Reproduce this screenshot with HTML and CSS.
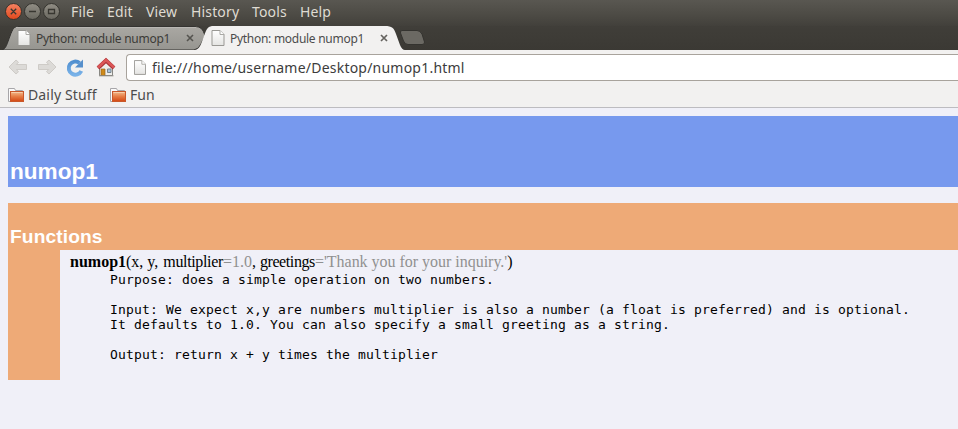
FILE: index.html
```html
<!DOCTYPE html>
<html lang="en">
<head>
<meta charset="utf-8">
<title>Python: module numop1</title>
<link rel="stylesheet" href="styles.css">
</head>
<body>
<svg width="0" height="0" class="defs">
  <defs>
    <linearGradient id="tabgrey" x1="0" y1="0" x2="0" y2="1"><stop offset="0" stop-color="#aaa8a3"/><stop offset="1" stop-color="#969590"/></linearGradient>
    <linearGradient id="red" x1="0" y1="0" x2="0" y2="1"><stop offset="0" stop-color="#f58262"/><stop offset="1" stop-color="#e0481c"/></linearGradient>
    <linearGradient id="grey" x1="0" y1="0" x2="0" y2="1"><stop offset="0" stop-color="#918e85"/><stop offset="1" stop-color="#69675f"/></linearGradient>
    <linearGradient id="paper" x1="0" y1="0" x2="0" y2="1"><stop offset="0" stop-color="#fff"/><stop offset="1" stop-color="#e4e4e2"/></linearGradient>
    <linearGradient id="orange" x1="0" y1="0" x2="0" y2="1"><stop offset="0" stop-color="#f3bd8e"/><stop offset=".5" stop-color="#e67d45"/><stop offset="1" stop-color="#d34713"/></linearGradient>
    <linearGradient id="blue" x1="0" y1="0" x2="0" y2="1"><stop offset="0" stop-color="#5290d0"/><stop offset="1" stop-color="#79b2e8"/></linearGradient>
    <symbol id="page" viewBox="0 0 13 16"><path d="M.5.5h8l4 4v11H.5z" fill="url(#paper)" stroke="#999894"/><path d="M8.5.5v4h4" fill="#fff" stroke="#aaa9a5"/></symbol>
    <symbol id="folder" viewBox="0 0 17 16"><path d="M.5 14.5V1.5h6l1 2h7v11z" fill="#fafafa" stroke="#a7a6a9"/><rect x="2.5" y="4.500" width="13" height="10" fill="url(#orange)" stroke="#c9582a"/><path d="M3.500 5.500h11" stroke="#f7cfaa"/></symbol>
  </defs>
</svg>
<header class="menubar">
  <svg class="controls" width="71" height="26" viewBox="0 0 71 26">
    <g stroke="#34332e"><circle cx="13.500" cy="11.500" r="8" fill="url(#red)"/><circle cx="32.500" cy="11.500" r="8" fill="url(#grey)"/><circle cx="51.500" cy="11.500" r="8" fill="url(#grey)"/></g>
    <path d="M10.800 8.800l5.400 5.400M16.200 8.800l-5.400 5.400M29 11.500h7M48.500 9.500h6v4h-6z" fill="none" stroke="#383731" stroke-width="1.300"/>
  </svg>
  <span class="m-file">File</span><span class="m-edit">Edit</span><span class="m-view">View</span><span class="m-history">History</span><span class="m-tools">Tools</span><span class="m-help">Help</span>
</header>
<nav class="tabs">
  <div class="tab back">
    <svg class="shape" width="205" height="24"><path d="M0 24C4 23 5 18 8 10C11 2 12 .5 17 .5H192C199 .5 201 3 203 10L199 18Q197 23 192 24z" fill="url(#tabgrey)" stroke="#343330"/><path d="M14 1.500H194" stroke="#b9b7b3"/></svg>
    <svg class="doc" width="14" height="16"><use href="#page"/></svg>
    <span class="title">Python: module numop1</span>
    <svg class="close" width="8" height="8"><path d="M1 1l6 6M7 1L1 7" stroke="#55544f" stroke-width="1.600"/></svg>
  </div>
  <div class="tab front">
    <svg class="shape" width="210" height="24"><path d="M0 24C5 23 6 18 9 10C12 2 13 0 19 0H190C197 0 199 2 201 8L205 19Q207 24 210 24z" fill="#f2f1f0"/></svg>
    <svg class="doc" width="14" height="16"><use href="#page"/></svg>
    <span class="title">Python: module numop1</span>
    <svg class="close" width="8" height="8"><path d="M1 1l6 6M7 1L1 7" stroke="#65635f" stroke-width="1.700"/></svg>
  </div>
  <svg class="newtab" width="27" height="16"><path d="M3 .5H18Q21 .5 23 4L25.500 12Q26 14.500 23 14.500H9Q6 14.500 4.500 11L1.500 3Q1 .5 3 .5z" fill="#6b6963" stroke="#34332f"/></svg>
</nav>
<div class="toolbar">
  <svg class="tools" width="126" height="32" viewBox="0 50 126 32">
    <path d="M9 67l7-7 2.500 2.300-2.200 2.200H26.500v5H16.300l2.200 2.200-2.500 2.300z" fill="#dcdad7" stroke="#cecbc7" stroke-linejoin="round"/>
    <path d="M56 67l-7-7-2.500 2.300 2.200 2.200H38.500v5h10.200l-2.200 2.200 2.500 2.300z" fill="#dcdad7" stroke="#cecbc7" stroke-linejoin="round"/>
    <path d="M81.300 71A6.600 6.600 0 1 1 79.500 63" fill="none" stroke="url(#blue)" stroke-width="4"/><path d="M83 59.500V67.500H75z" fill="#568fcb"/>
    <path d="M99.500 67v8.500h13V67L106 60z" fill="#eeeeeb" stroke="#888782"/><path d="M101 69h4v6.500h-4z" fill="#cf8a19" stroke="#94631d" stroke-width=".7"/><path d="M107.500 69h3.500v3.500h-3.500z" fill="#a9c3dc" stroke="#78858e"/><path d="M98 68L106 60.500L114 68" fill="none" stroke="#a83236" stroke-width="4"/><path d="M98 67.500L106 60L114 67.500" fill="none" stroke="#db5657" stroke-width="2.600"/><path d="M99 75.800h14.500" stroke="#8d8c88"/>
  </svg>
  <div class="address"><svg width="12" height="15"><use href="#page"/></svg><span class="url">file:///home/username/Desktop/numop1.html</span></div>
</div>
<div class="bookmarks">
  <svg width="17" height="16"><use href="#folder"/></svg><span class="daily">Daily Stuff</span>
  <svg width="17" height="16"><use href="#folder"/></svg><span class="fun">Fun</span>
</div>
<main>
  <h1>numop1</h1>
  <section>
    <h2>Functions</h2>
    <div class="content">
      <div class="signature"><b>numop1</b>(x, y, <span class="arg first">multiplier</span><i>=1.0</i>, <span class="arg">greetings</span><i>='Thank you for your inquiry.'</i>)</div>
<pre>Purpose: does a simple operation on two numbers.

Input: We expect x,y are numbers multiplier is also a number (a float is preferred) and is optional.
It defaults to 1.0. You can also specify a small greeting as a string.

Output: return x + y times the multiplier</pre>
    </div>
  </section>
</main>
</body>
</html>
```
FILE: styles.css
```css
* { box-sizing: border-box; }
body { margin: 0; width: 958px; height: 429px; overflow: hidden; background: #f0f0f8; font-family: "Noto Sans", "Open Sans", sans-serif; }
svg { display: block; flex: none; }
.defs { position: absolute; }
.menubar { display: flex; height: 26px; background: linear-gradient(#595751, #4c4a44 60%, #42403b); color: #dfdbd2; font-size: 14px; line-height: 24px; letter-spacing: .15px; white-space: nowrap; }
.menubar span { flex: none; }
.m-file { width: 36px; }
.m-edit { width: 39px; }
.m-view { width: 45px; }
.m-history { width: 61px; }
.m-tools { width: 48px; }
.tabs { display: flex; height: 24px; background: linear-gradient(#403e39, #3b3934); padding-left: 2px; }
.tab { display: flex; align-items: center; position: relative; flex: none; height: 24px; font-size: 12px; letter-spacing: -.28px; white-space: nowrap; }
.tab.back { width: 193px; padding-left: 15px; color: #3c3b37; }
.tab.front { width: 204px; padding-left: 16px; color: #4c4c4c; }
.shape { position: absolute; left: 0; top: 0; }
.doc, .title, .close { position: relative; }
.title { width: 150px; margin-left: 5px; line-height: 25px; }
.newtab { margin-top: 4px; }
.toolbar { display: flex; height: 32px; background: #f2f1f0; }
.address { display: flex; align-items: center; flex: 1; height: 27px; margin-top: 4px; padding-left: 7px; background: #fff; border: 1px solid #a8a39c; border-right: 0; border-radius: 4px 0 0 4px; }
.url { margin-left: 6px; font-size: 14px; line-height: 24px; letter-spacing: .22px; color: #3c3c3c; white-space: nowrap; }
.bookmarks { display: flex; align-items: center; height: 26px; padding-left: 8px; background: #f2f1f0; border-bottom: 1px solid #bdbcc0; font-size: 14px; line-height: 24px; color: #4c4c4c; white-space: nowrap; }
.daily { width: 82px; margin-left: 3px; letter-spacing: .15px; }
.fun { margin-left: 3px; }
main { padding: 8px 0 0 8px; }
h1, h2 { margin: 0; color: #fff; font-family: "Liberation Sans", sans-serif; font-weight: bold; }
h1 { height: 71px; padding: 42px 0 0 2px; background: #7799ee; font-size: 22.6px; line-height: 27px; }
section { height: 177px; margin-top: 16px; background: #eeaa77; }
h2 { height: 47px; padding: 23px 0 0 2px; font-size: 19.2px; line-height: 22px; letter-spacing: .1px; }
.content { height: 130px; margin-left: 52px; padding: 3px 0 0 10px; background: #f0f0f8; color: #000; }
.signature { height: 19px; font: 16px/18px "Liberation Serif", serif; white-space: nowrap; }
.signature i { font-style: normal; color: #909090; letter-spacing: -.02px; }
.arg { letter-spacing: -.4px; }
.arg.first { margin-left: 1px; letter-spacing: -.35px; }
pre { margin: 0 0 0 40px; font: 13px/15px "DejaVu Sans Mono", monospace; letter-spacing: .173px; }
```
